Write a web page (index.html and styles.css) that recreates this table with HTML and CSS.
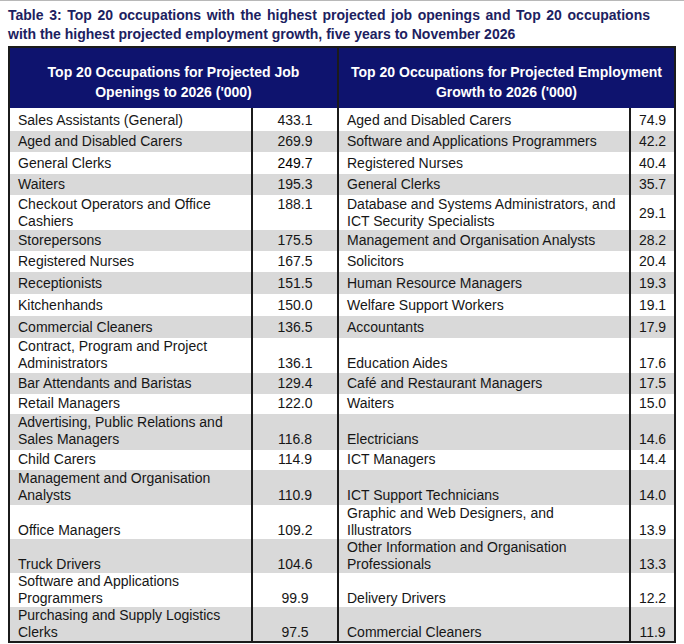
FILE: index.html
```html
<!DOCTYPE html>
<html lang="en">
<head>
<meta charset="utf-8">
<title>Table 3</title>
<link rel="stylesheet" href="styles.css">
</head>
<body>
<div class="page">
  <h1 class="caption">Table 3: Top 20 occupations with the highest projected job openings and Top 20 occupations with the highest projected employment growth, five years to November 2026</h1>
  <table class="occ">
    <colgroup>
      <col class="c-name-l"><col class="c-val-l"><col class="c-name-r"><col class="c-val-r">
    </colgroup>
    <thead>
      <tr class="head">
        <th colspan="2" class="h-left">Top 20 Occupations for Projected Job<br>Openings to 2026 ('000)</th>
        <th colspan="2" class="h-right">Top 20 Occupations for Projected Employment<br>Growth to 2026 ('000)</th>
      </tr>
    </thead>
    <tbody>
      <tr class="r23"><td class="name">Sales Assistants (General)</td><td class="val">433.1</td><td class="name rname">Aged and Disabled Carers</td><td class="val rval">74.9</td></tr>
      <tr class="r21 grey"><td class="name">Aged and Disabled Carers</td><td class="val">269.9</td><td class="name rname">Software and Applications Programmers</td><td class="val rval">42.2</td></tr>
      <tr class="r22"><td class="name">General Clerks</td><td class="val strong">249.7</td><td class="name rname">Registered Nurses</td><td class="val rval">40.4</td></tr>
      <tr class="r21 grey"><td class="name">Waiters</td><td class="val">195.3</td><td class="name rname">General Clerks</td><td class="val rval">35.7</td></tr>
      <tr class="r35 top"><td class="name">Checkout Operators and Office<br>Cashiers</td><td class="val">188.1</td><td class="name rname">Database and Systems Administrators, and<br>ICT Security Specialists</td><td class="val rval mid">29.1</td></tr>
      <tr class="r21 grey"><td class="name">Storepersons</td><td class="val">175.5</td><td class="name rname">Management and Organisation Analysts</td><td class="val rval">28.2</td></tr>
      <tr class="r21"><td class="name">Registered Nurses</td><td class="val">167.5</td><td class="name rname">Solicitors</td><td class="val rval">20.4</td></tr>
      <tr class="r22 grey"><td class="name">Receptionists</td><td class="val">151.5</td><td class="name rname">Human Resource Managers</td><td class="val rval">19.3</td></tr>
      <tr class="r22"><td class="name">Kitchenhands</td><td class="val">150.0</td><td class="name rname">Welfare Support Workers</td><td class="val rval">19.1</td></tr>
      <tr class="r22 grey"><td class="name">Commercial Cleaners</td><td class="val">136.5</td><td class="name rname">Accountants</td><td class="val rval">17.9</td></tr>
      <tr class="r35"><td class="name">Contract, Program and Project<br>Administrators</td><td class="val">136.1</td><td class="name rname">Education Aides</td><td class="val rval">17.6</td></tr>
      <tr class="r21 grey"><td class="name">Bar Attendants and Baristas</td><td class="val">129.4</td><td class="name rname">Café and Restaurant Managers</td><td class="val rval">17.5</td></tr>
      <tr class="r20"><td class="name">Retail Managers</td><td class="val">122.0</td><td class="name rname">Waiters</td><td class="val rval">15.0</td></tr>
      <tr class="r36 grey"><td class="name">Advertising, Public Relations and<br>Sales Managers</td><td class="val">116.8</td><td class="name rname">Electricians</td><td class="val rval">14.6</td></tr>
      <tr class="r20"><td class="name">Child Carers</td><td class="val">114.9</td><td class="name rname">ICT Managers</td><td class="val rval">14.4</td></tr>
      <tr class="r35 grey"><td class="name">Management and Organisation<br>Analysts</td><td class="val">110.9</td><td class="name rname">ICT Support Technicians</td><td class="val rval">14.0</td></tr>
      <tr class="r34"><td class="name">Office Managers</td><td class="val">109.2</td><td class="name rname">Graphic and Web Designers, and<br>Illustrators</td><td class="val rval">13.9</td></tr>
      <tr class="r34 grey"><td class="name">Truck Drivers</td><td class="val">104.6</td><td class="name rname">Other Information and Organisation<br>Professionals</td><td class="val rval">13.3</td></tr>
      <tr class="r34"><td class="name">Software and Applications<br>Programmers</td><td class="val">99.9</td><td class="name rname">Delivery Drivers</td><td class="val rval">12.2</td></tr>
      <tr class="r34 grey"><td class="name">Purchasing and Supply Logistics<br>Clerks</td><td class="val">97.5</td><td class="name rname">Commercial Cleaners</td><td class="val rval">11.9</td></tr>
    </tbody>
  </table>
</div>
</body>
</html>
```
FILE: styles.css
```css
html, body {
  margin: 0;
  padding: 0;
  background: #ffffff;
}

body {
  border-top: 1px solid #b8b8b8;
  font-family: "Liberation Sans", Arial, sans-serif;
  color: #161616;
}

.page {
  padding: 5px 8px 0 8px;
}

.caption {
  width: 642px;
  margin: 0 0 2px 0;
  font-size: 14px;
  line-height: 19px;
  font-weight: bold;
  text-align: justify;
  color: #1c2160;
}

.occ {
  width: 666px;
  border-collapse: collapse;
  table-layout: fixed;
  border: 2px solid #1b1b1b;
  font-size: 14px;
  line-height: 17px;
}

.c-name-l { width: 243px; }
.c-val-l { width: 86px; }
.c-name-r { width: 292px; }
.c-val-r { width: 45px; }

.head th {
  box-sizing: border-box;
  height: 61px;
  background: #0e136e;
  color: #ffffff;
  font-weight: bold;
  font-size: 14px;
  line-height: 20px;
  text-align: center;
  vertical-align: middle;
  padding: 8px 4px 0 4px;
}

.head .h-right {
  border-left: 2px solid #1b1b1b;
}

.occ td {
  box-sizing: border-box;
  padding: 0 8px 2px 8px;
  vertical-align: bottom;
  white-space: nowrap;
}

.occ td.name {
  text-align: left;
}

.occ td.val {
  text-align: center;
  border-left: 2px solid #1b1b1b;
  padding-left: 2px;
  padding-right: 2px;
}

.occ td.rname {
  border-left: 2px solid #1b1b1b;
}

.occ td.rval {
  text-align: center;
}

.grey td {
  background: #d9d9d9;
}

.strong {
  color: #000000;
}

.r20 td { height: 20px; }
.r21 td { height: 21px; }
.r22 td { height: 22px; }
.r23 td { height: 23px; }
.r34 td { height: 34px; padding-bottom: 0; }
.r35 td { height: 35px; padding-bottom: 1px; }
.r36 td { height: 36px; padding-bottom: 2px; }

.occ .top td {
  vertical-align: top;
  padding-top: 1px;
  padding-bottom: 0;
}

.occ .top td.mid {
  vertical-align: middle;
}
```
